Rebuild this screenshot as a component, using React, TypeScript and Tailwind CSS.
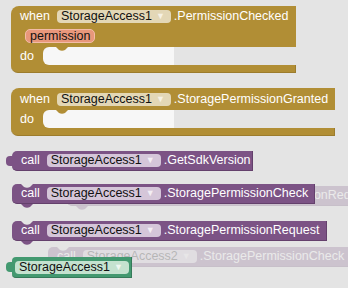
import type { ReactNode } from 'react'

const font = "font-['Liberation_Sans',Arial,sans-serif]"

function Drop({ label, pill, arrow }: { label: string; pill: string; arrow: string }) {
  return (
    <span className={`flex h-[13px] shrink-0 items-center rounded-[4px] pl-[4px] pr-[6px] text-[#111] ${pill}`}>
      <span>{label}</span>
      <span className={`ml-[4px] text-[9px] ${arrow}`}>▼</span>
    </span>
  )
}

// pequena saliência do encaixe (notch) desenhada em svg
function Notch({ fill, className }: { fill: string; className: string }) {
  return (
    <svg width="12" height="4" viewBox="0 0 12 4" className={`absolute ${className}`}>
      <path d="M0 0 L3 3 Q6 4.6 9 3 L12 0 Z" fill={fill} />
    </svg>
  )
}

function EventBlock({
  top,
  width,
  event,
  param,
}: {
  top: string
  width: string
  event: string
  param?: ReactNode
}) {
  return (
    <div className={`absolute left-[11px] ${top} ${width}`}>
      <div className={`rounded-tl-[8px] bg-[#b18e35] pb-[4px] pl-[9px] ${param ? 'pt-[3px]' : 'pt-[4px]'}`}>
        <div className="flex h-[14px] items-center text-white">
          <span>when</span>
          <span className="ml-[7px]">
            <Drop label="StorageAccess1" pill="bg-[#e3d7b6]" arrow="text-[#f6f1e4]" />
          </span>
          <span className="ml-[3px]">{event}</span>
        </div>
        {param}
      </div>
      <div className="flex h-[18px]">
        <div className="flex w-[32px] items-center bg-[#b18e35] pl-[9px] text-white">do</div>
        <div className="relative w-[131px] bg-[linear-gradient(to_right,#b18e35_8px,transparent_8px)]">
          <div className="h-full rounded-l-[6px] bg-[#f7f7f7]" />
          <Notch fill="#b18e35" className="left-[13px] top-0" />
        </div>
      </div>
      <div className="h-[8px] rounded-bl-[7px] border-b border-r border-[#9c7c2c] bg-[#b18e35]" />
    </div>
  )
}

function CallBlock({
  pos,
  width,
  comp = 'StorageAccess1',
  method,
  value,
  ghost,
}: {
  pos: string
  width: string
  comp?: string
  method: string
  value?: boolean
  ghost?: boolean
}) {
  return (
    <div className={`absolute h-[20px] ${pos} ${width} ${ghost ? 'opacity-[0.22]' : ''}`}>
      <div className="flex h-full items-center rounded-l-[5px] border-b border-r border-[#64406c] bg-[#7c5385] pl-[9px] text-white">
        <span>call</span>
        <span className="ml-[7px]">
          <Drop label={comp} pill="bg-[#d5c6d9]" arrow="text-[#f3eef4]" />
        </span>
        <span className="ml-[3px] whitespace-nowrap">{method}</span>
      </div>
      {value ? (
        <div className="absolute left-[-6px] top-[5px] h-[10px] w-[7px] rounded-l-[4px] bg-[#7c5385]" />
      ) : (
        <>
          <Notch fill="#e4e4e4" className="left-[9px] top-0" />
          <Notch fill="#7c5385" className="left-[9px] top-[20px]" />
        </>
      )}
    </div>
  )
}

export default function App() {
  return (
    <div className={`relative h-[288px] w-[348px] overflow-hidden bg-[#e4e4e4] text-[12.5px] leading-none ${font}`}>
      <EventBlock
        top="top-[6px]"
        width="w-[285px]"
        event=".PermissionChecked"
        param={
          <div className="mt-[6px] flex h-[14px]">
            <span className="ml-[5px] flex items-center rounded-[5px] border border-[#f3bca8] bg-[#e8977b] px-[4px] text-[#111]">
              permission
            </span>
          </div>
        }
      />
      <EventBlock top="top-[88px]" width="w-[324px]" event=".StoragePermissionGranted" />

      {/* blocos "fantasma" sendo arrastados, atrás dos demais */}
      <CallBlock pos="left-[67px] top-[186px]" width="w-[315px]" method=".StoragePermissionRequest" ghost />
      <CallBlock pos="left-[48px] top-[247px]" width="w-[320px]" comp="StorageAccess2" method=".StoragePermissionCheck" ghost />

      <CallBlock pos="left-[12px] top-[151px]" width="w-[241px]" method=".GetSdkVersion" value />
      <CallBlock pos="left-[12px] top-[184px]" width="w-[303px]" method=".StoragePermissionCheck" />
      <CallBlock pos="left-[12px] top-[221px]" width="w-[315px]" method=".StoragePermissionRequest" />

      <div className="absolute left-[12px] top-[257px] h-[21px] w-[120px]">
        <div className="flex h-full items-center rounded-l-[4px] border-b border-r border-[#357a59] bg-[#439970] pl-[3px]">
          <Drop label="StorageAccess1" pill="bg-[#c4e2cf]" arrow="text-[#eef7f1]" />
        </div>
        <div className="absolute left-[-6px] top-[5px] h-[10px] w-[7px] rounded-l-[4px] bg-[#439970]" />
      </div>
    </div>
  )
}
